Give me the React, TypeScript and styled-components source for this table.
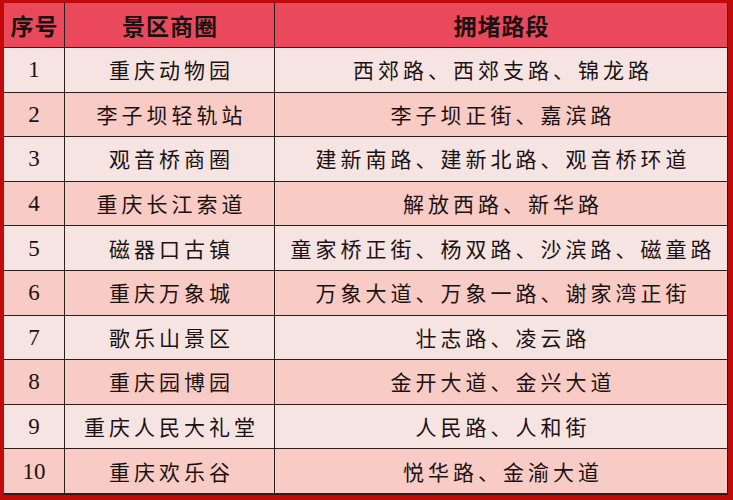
import React from "react";
import styled, { createGlobalStyle } from "styled-components";

const Global = createGlobalStyle`
  html, body { margin: 0; padding: 0; background: #c00000; }
  #root { width: 733px; height: 500px; }
`;

const Frame = styled.div`
  box-sizing: border-box;
  width: 733px;
  height: 500px;
  background: #c20a0a;
  padding: 3px 5px 5px 4px;
`;

const Table = styled.div`
  display: grid;
  grid-template-columns: 61px 210px 1fr;
  grid-template-rows: 45px repeat(10, 1fr);
  height: 100%;
  border-right: 1.5px solid #2b1a1a;
  border-bottom: 1.5px solid #2b1a1a;
  box-sizing: border-box;
`;

const Cell = styled.div<{ $kind: "head" | "odd" | "even"; $last?: boolean; $spacing?: number; $serif?: boolean }>`
  display: flex;
  align-items: center;
  justify-content: center;
  box-sizing: border-box;
  border-bottom: 1.5px solid #2a2020;
  border-right: ${(p) => (p.$last ? "none" : "1.5px solid #2a2020")};
  background: ${(p) => (p.$kind === "head" ? "#e9495a" : p.$kind === "odd" ? "#f6e4e3" : "#f9cbc5")};
  color: #1a1212;
  font-family: ${(p) =>
    p.$serif
      ? '"Liberation Serif", "Times New Roman", serif'
      : '"Noto Sans CJK SC", "Noto Sans", sans-serif'};
  font-size: ${(p) => (p.$kind === "head" ? "23px" : p.$serif ? "23px" : "21px")};
  font-weight: ${(p) => (p.$kind === "head" ? 700 : 400)};
  letter-spacing: ${(p) => (p.$spacing ?? 0)}px;
  text-indent: ${(p) => (p.$spacing ?? 0)}px;
  white-space: nowrap;
  line-height: 1;
`;

const rows: [string, string][] = [
  ["重庆动物园", "西郊路、西郊支路、锦龙路"],
  ["李子坝轻轨站", "李子坝正街、嘉滨路"],
  ["观音桥商圈", "建新南路、建新北路、观音桥环道"],
  ["重庆长江索道", "解放西路、新华路"],
  ["磁器口古镇", "童家桥正街、杨双路、沙滨路、磁童路"],
  ["重庆万象城", "万象大道、万象一路、谢家湾正街"],
  ["歌乐山景区", "壮志路、凌云路"],
  ["重庆园博园", "金开大道、金兴大道"],
  ["重庆人民大礼堂", "人民路、人和街"],
  ["重庆欢乐谷", "悦华路、金渝大道"],
];

export default function App() {
  return (
    <>
      <Global />
      <Frame>
        <Table>
          <Cell $kind="head" $spacing={1}>序号</Cell>
          <Cell $kind="head" $spacing={1}>景区商圈</Cell>
          <Cell $kind="head" $spacing={1} $last>拥堵路段</Cell>
          {rows.map(([place, roads], i) => {
            const kind = i % 2 === 0 ? "odd" : "even";
            return (
              <React.Fragment key={i}>
                <Cell $kind={kind} $serif>{i + 1}</Cell>
                <Cell $kind={kind} $spacing={4}>{place}</Cell>
                <Cell $kind={kind} $spacing={4} $last>{roads}</Cell>
              </React.Fragment>
            );
          })}
        </Table>
      </Frame>
    </>
  );
}
